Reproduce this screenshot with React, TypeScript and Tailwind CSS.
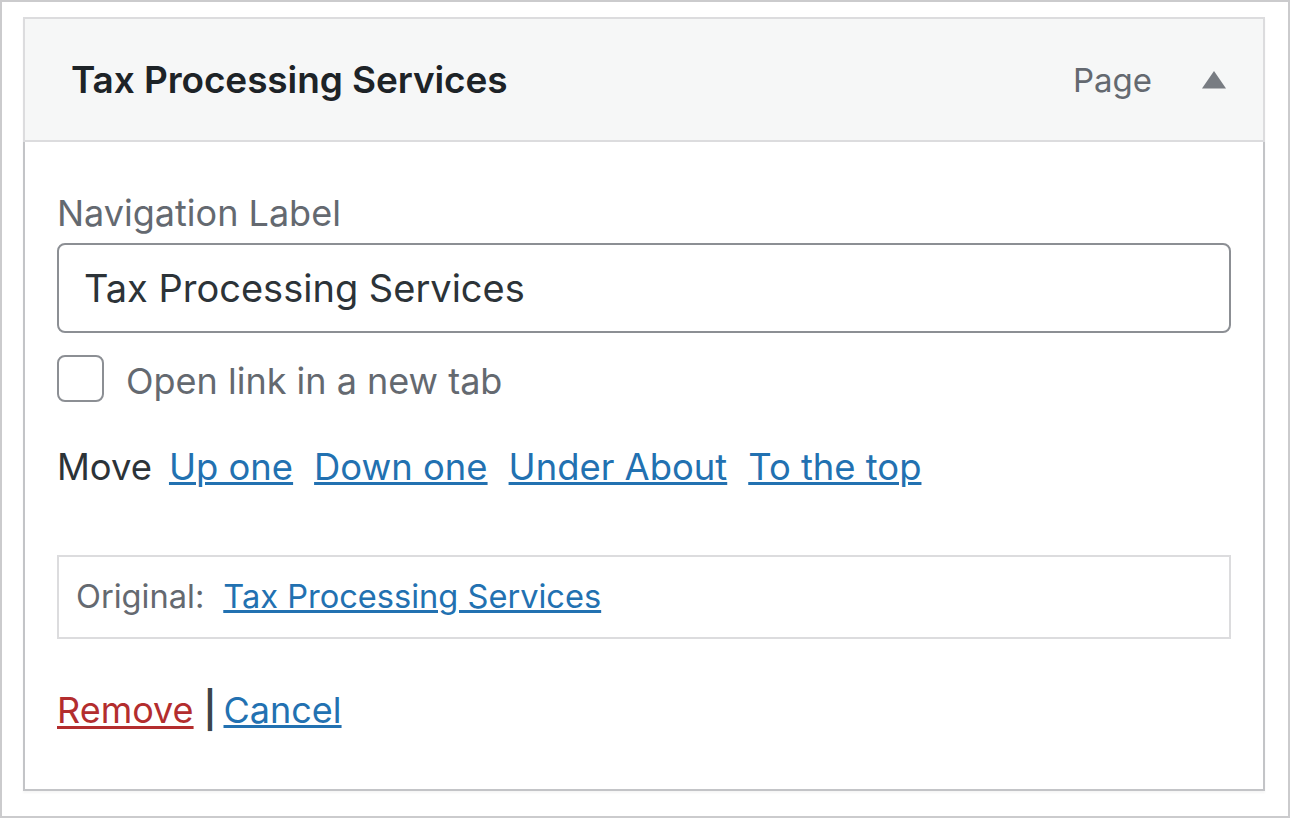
import React from "react";

export default function App() {
  const link =
    "text-[#2271b1] underline decoration-[3px] underline-offset-[2px]";
  return (
    <div
      className="w-[1290px] h-[818px] box-border border-2 border-[#cbcbcd] bg-white pl-[21px] pr-[23px] pt-[15px]"
      style={{ fontFamily: "Inter, 'Noto Sans', sans-serif" }}
    >
      <div className="h-[125px] box-border border-2 border-[#dcdcde] bg-[#f6f7f7] flex items-center pl-[46px] pr-[37px] shadow-[0_2px_2px_rgba(0,0,0,0.04)]">
        <div className="text-[37px] leading-[48px] font-semibold text-[#1d2327] tracking-[-0.1px]">
          Tax Processing Services
        </div>
        <div className="ml-auto text-[33px] leading-[48px] text-[#646970]">
          Page
        </div>
        <svg
          className="ml-[50px]"
          width="24"
          height="18"
          viewBox="0 0 24 18"
        >
          <polygon points="12,0 24,17.5 0,17.5" fill="#787c82" />
        </svg>
      </div>
      <div className="h-[649px] box-border border-2 border-t-0 border-[#c3c4c7] bg-white px-[32px] pt-[51px] flex flex-col shadow-[0_2px_2px_rgba(0,0,0,0.04)]">
        <div className="h-[40px] text-[36px] leading-[40px] text-[#646970]">
          Navigation Label
        </div>
        <div className="mt-[10px] h-[90px] box-border border-2 border-[#8c8f94] rounded-[8px] flex items-center pl-[25px] text-[38px] leading-[48px] text-[#2c3338]">
          Tax Processing Services
        </div>
        <div className="mt-[22px] h-[47px] flex items-center">
          <div className="w-[47px] h-[47px] box-border border-2 border-[#8c8f94] rounded-[8px] bg-white" />
          <div className="ml-[22px] text-[36px] leading-[48px] text-[#646970] pt-[4px]">
            Open link in a new tab
          </div>
        </div>
        <div className="mt-[41px] h-[48px] flex items-center text-[36.4px] leading-[48px]">
          <span className="text-[#2c3338]">Move</span>
          <span className={"ml-[17px] " + link}>Up one</span>
          <span className={"ml-[21px] " + link}>Down one</span>
          <span className={"ml-[21px] " + link}>Under About</span>
          <span className={"ml-[21px] " + link}>To the top</span>
        </div>
        <div className="mt-[64px] h-[84px] box-border border-2 border-[#dcdcde] flex items-center pl-[17px] pb-[3px] text-[32.6px] leading-[44px]">
          <span className="text-[#646970]">Original:</span>
          <span className={"ml-[19px] " + link}>Tax Processing Services</span>
        </div>
        <div className="mt-[47px] h-[48px] flex items-center text-[36px] leading-[48px]">
          <span className="text-[#b32d2e] underline decoration-[3px] underline-offset-[3px]">
            Remove
          </span>
          <span className="ml-[10px] text-[#3c434a] font-semibold">|</span>
          <span className={"ml-[7px] " + link}>Cancel</span>
        </div>
      </div>
    </div>
  );
}
